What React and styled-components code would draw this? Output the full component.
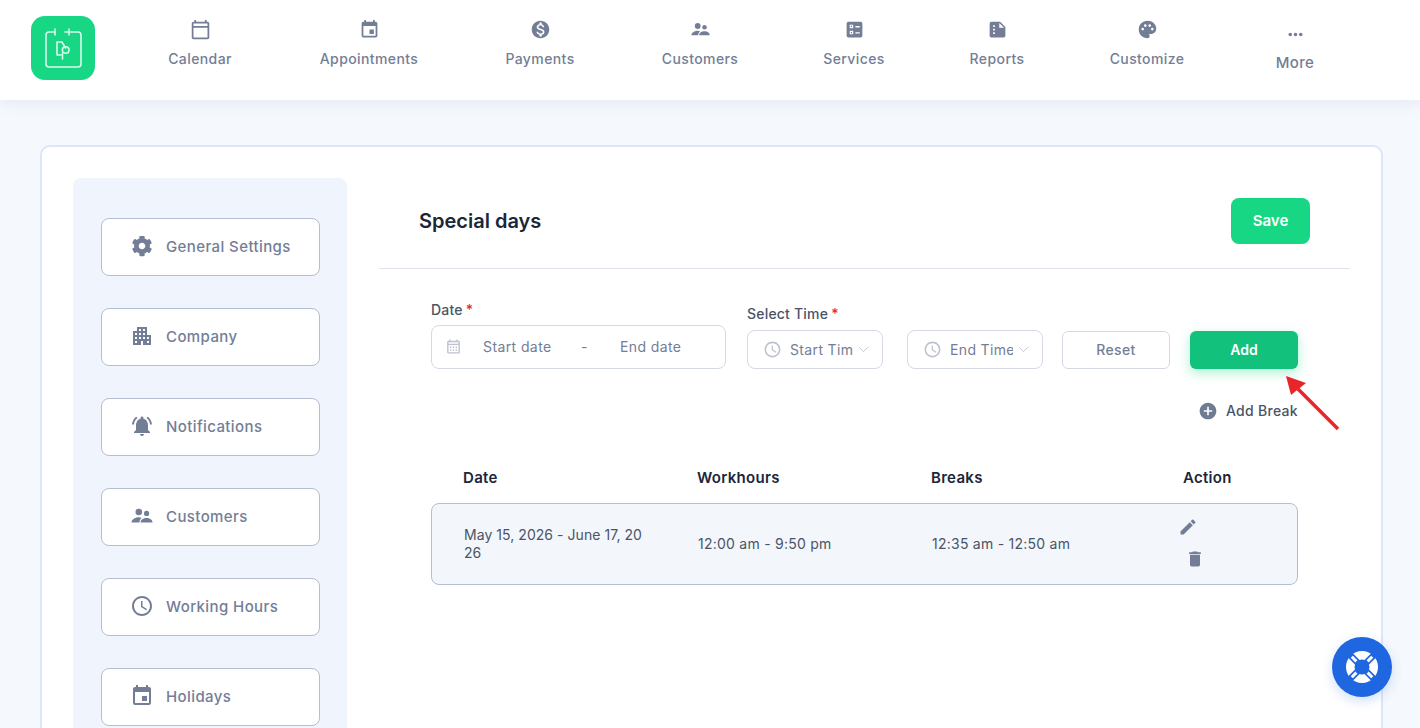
import React from 'react';
import styled, { createGlobalStyle } from 'styled-components';
import {
  MdOutlineCalendarToday,
  MdEvent,
  MdMonetizationOn,
  MdPalette,
  MdMoreHoriz,
  MdApartment,
  MdNotificationsActive,
  MdAccessTime,
  MdEdit,
  MdDelete,
  MdAddCircle,
  MdOutlineCalendarMonth,
} from 'react-icons/md';
import { FaCog } from 'react-icons/fa';
import { LuChevronDown } from 'react-icons/lu';

const GlobalStyle = createGlobalStyle`
  html, body {
    margin: 0;
    padding: 0;
    height: 100%;
    overflow: hidden;
    background: #f5f8fc;
  }
  body {
    font-family: Inter, "Liberation Sans", sans-serif;
  }
  * {
    box-sizing: border-box;
  }
`;

const Page = styled.div`
  position: relative;
  width: 1420px;
  height: 728px;
  overflow: hidden;
`;

const Header = styled.header`
  height: 100px;
  background: #fff;
  display: flex;
  align-items: flex-start;
  padding: 16px 0 0 31px;
  box-shadow: 0 2px 14px rgba(120, 135, 175, 0.14);
`;

const Logo = styled.div`
  width: 64px;
  height: 64px;
  border-radius: 14px;
  background: #17d684;
  display: flex;
  align-items: center;
  justify-content: center;
  margin-right: 29px;
  flex: none;
`;

const Nav = styled.nav`
  display: flex;
`;

const NavItem = styled.a`
  width: ${(p) => p.$w}px;
  display: flex;
  flex-direction: column;
  align-items: center;
  color: #737e96;
  font-size: 14px;
  font-weight: 500;
  letter-spacing: 0.4px;
  line-height: 20px;
  svg {
    display: block;
    width: 21px;
    height: 21px;
    margin-top: ${(p) => (p.$low ? 8 : 3)}px;
    margin-bottom: ${(p) => (p.$low ? 4 : 9)}px;
  }
`;

const MoreLabel = styled.span`
  font-size: 15px;
  margin-top: 4px;
`;

const Body = styled.div`
  padding: 45px 37px 0 40px;
`;

const Card = styled.section`
  display: flex;
  gap: 32px;
  height: 640px;
  background: #fff;
  border: 2px solid #dde6f5;
  border-radius: 10px;
  padding: 31px 31px 0;
`;

const Sidebar = styled.aside`
  width: 274px;
  flex: none;
  background: #f0f5fd;
  border-radius: 8px;
  padding: 40px 27px 40px 28px;
  display: flex;
  flex-direction: column;
  gap: 32px;
`;

const SideLink = styled.a`
  height: 58px;
  flex: none;
  display: flex;
  align-items: center;
  background: #fff;
  border: 1px solid #b5bdd0;
  border-radius: 8px;
  padding: 0 0 2px 28px;
  color: #737e96;
  font-size: 15px;
  font-weight: 500;
  letter-spacing: 0.4px;
  svg {
    width: 24px;
    height: 24px;
    margin-right: 12px;
    flex: none;
  }
`;

const GearIcon = styled(FaCog)`
  padding: 1.5px;
`;

const Main = styled.main`
  flex: 1;
  min-width: 0;
`;

const TitleRow = styled.div`
  display: flex;
  align-items: center;
  justify-content: space-between;
  padding: 20px 40px 24px;
  border-bottom: 1px solid #dfe3ea;
`;

const Title = styled.h1`
  margin: 0;
  font-size: 20px;
  font-weight: 600;
  color: #1c2639;
`;

const SaveButton = styled.button`
  width: 79px;
  height: 46px;
  border: none;
  border-radius: 8px;
  padding: 0 0 2px;
  background: #17d684;
  color: #fff;
  font: inherit;
  font-size: 15px;
  font-weight: 600;
`;

const Content = styled.div`
  padding: 32px 52px 0;
`;

const FormRow = styled.div`
  display: flex;
  align-items: flex-end;
`;

const Field = styled.div`
  display: flex;
  flex-direction: column;
  margin-right: ${(p) => p.$mr || 0}px;
`;

const Label = styled.label`
  font-size: 14px;
  font-weight: 500;
  line-height: 18px;
  color: #4a5468;
  letter-spacing: 0.2px;
  margin-bottom: ${(p) => p.$mb}px;
  i {
    color: #e5283a;
    font-style: normal;
    margin-left: 3px;
  }
`;

const DateInput = styled.div`
  width: 295px;
  height: 44px;
  display: flex;
  align-items: center;
  border: 1px solid #d5d9e5;
  border-radius: 8px;
  padding: 0 0 2px 13px;
  color: #737e96;
  font-size: 14px;
  letter-spacing: 0.4px;
  svg {
    width: 17px;
    height: 17px;
    color: #bcc2d0;
    flex: none;
  }
`;

const DatePart = styled.span`
  width: ${(p) => p.$w}px;
  margin-left: ${(p) => p.$ml}px;
  flex: none;
`;

const SelectBox = styled.div`
  width: 136px;
  height: 39px;
  display: flex;
  align-items: center;
  border: 1px solid #d5d9e5;
  border-radius: 8px;
  padding: 0 0 1px 15px;
  color: #737e96;
  font-size: 14px;
  letter-spacing: 0.35px;
  margin-right: ${(p) => p.$mr || 0}px;
  > svg:first-child {
    width: 19px;
    height: 19px;
    color: #bcc2d0;
    flex: none;
    margin-right: 8px;
  }
  > svg:last-child {
    width: 17px;
    height: 17px;
    color: #b9bfcc;
    flex: none;
    stroke-width: 1.2;
    margin-left: 2px;
  }
`;

const SelectText = styled.span`
  width: 63px;
  overflow: hidden;
  white-space: nowrap;
`;

const GhostButton = styled.button`
  width: 108px;
  height: 38px;
  margin-right: 20px;
  background: #fff;
  border: 1px solid #d5d9e5;
  border-radius: 6px;
  padding: 0 0 2px;
  color: #737e96;
  font: inherit;
  font-size: 14px;
  font-weight: 500;
  letter-spacing: 0.35px;
`;

const AddButton = styled.button`
  width: 108px;
  height: 38px;
  background: #12c27c;
  border: none;
  border-radius: 6px;
  padding: 0 0 1px;
  color: #fff;
  font: inherit;
  font-size: 14px;
  font-weight: 600;
  box-shadow: 0 4px 12px rgba(23, 214, 132, 0.35);
`;

const AddBreak = styled.a`
  display: flex;
  align-items: center;
  justify-content: flex-end;
  margin-top: 32px;
  height: 20px;
  color: #4a5468;
  font-size: 14px;
  font-weight: 500;
  letter-spacing: 0.3px;
  line-height: 18px;
  padding-bottom: 1px;
  svg {
    width: 20px;
    height: 20px;
    color: #6f7a93;
    margin: 1px 8px 0 0;
  }
`;

const TableHead = styled.div`
  display: grid;
  grid-template-columns: 234px 234px 252px 1fr;
  padding-left: 32px;
  margin-top: 47px;
  font-size: 15px;
  font-weight: 600;
  line-height: 20px;
  color: #1c2639;
  letter-spacing: 0.3px;
`;

const TableRow = styled.div`
  display: grid;
  grid-template-columns: 234px 234px 246px 1fr;
  align-items: center;
  height: 82px;
  margin-top: 15px;
  padding-left: 32px;
  background: #f3f6fb;
  border: 1px solid #b5bdd0;
  border-radius: 8px;
  color: #4a5468;
  font-size: 14px;
  line-height: 18px;
  letter-spacing: 0.25px;
`;

const DateCell = styled.div`
  width: 184px;
  word-break: break-all;
  letter-spacing: 0.05px;
`;

const Actions = styled.div`
  display: flex;
  flex-direction: column;
  gap: 12px;
  margin-top: -3px;
  svg {
    display: block;
    width: 20px;
    height: 20px;
    color: #737e96;
  }
  svg:last-child {
    margin-left: 7px;
  }
`;

const ArrowMark = styled.svg`
  position: absolute;
  left: 1280px;
  top: 370px;
  width: 64px;
  height: 66px;
`;

const HelpButton = styled.button`
  position: absolute;
  left: 1332px;
  top: 637px;
  width: 60px;
  height: 60px;
  border-radius: 50%;
  border: none;
  padding: 0;
  background: #1f67e0;
  display: flex;
  align-items: center;
  justify-content: center;
  box-shadow: 0 4px 12px rgba(31, 103, 224, 0.2);
  svg {
    width: 32px;
    height: 32px;
  }
`;

const LogoMark = () => (
  <svg width="39" height="40" viewBox="0 0 39 40" fill="none" stroke="#d8fbeb" strokeWidth="1.6" strokeLinecap="round" strokeLinejoin="round">
    <path d="M11 4H5A3 3 0 0 0 2 7V36a3 3 0 0 0 3 3H34a3 3 0 0 0 3-3V7a3 3 0 0 0-3-3H21" />
    <path d="M11 1V7M25 1V7" />
    <path d="M13 14V27H17M13 14H18L21.500 20" />
    <circle cx="21.700" cy="22" r="3.300" />
    <path d="M18.500 25V31" />
  </svg>
);

const LifeRing = () => (
  <svg viewBox="0 0 32 32">
    <circle cx="16" cy="16" r="16" fill="#fff" />
    <g stroke="#1f67e0" strokeWidth="6.500">
      <path d="M4 4L28 28M28 4L4 28" />
    </g>
    <g stroke="#fff" strokeWidth="3">
      <path d="M5.800 5.800L10.400 10.400M26.200 5.800L21.600 10.400M5.800 26.200L10.400 21.600M26.200 26.200L21.600 21.600" />
    </g>
    <circle cx="16" cy="16" r="7.500" fill="#1f67e0" />
  </svg>
);

const PeopleIcon = () => (
  <svg viewBox="0 0 24 24" fill="currentColor">
    <circle cx="8.800" cy="8" r="3.300" />
    <circle cx="16.600" cy="9.400" r="2.600" />
    <path d="M1.500 18.600c0-2.800 3.600-5.300 7-5.300 1.200 0 2.300.3 3.200.7-1.400 1-2.300 2.500-2.300 4.600H1.500z" />
    <path d="M10.500 18.600c0-2.800 3-4.500 6-4.500s6 1.700 6 4.500H10.500z" />
  </svg>
);

const ServicesIcon = () => (
  <svg viewBox="0 0 24 24" fill="currentColor">
    <path
      fillRule="evenodd"
      d="M5 3h14a2 2 0 0 1 2 2v14a2 2 0 0 1-2 2H5a2 2 0 0 1-2-2V5a2 2 0 0 1 2-2zM6.500 6.500v4h4v-4h-4zm1.300 1.300h1.400v1.400H7.800V7.800zM6.500 13.500v4h4v-4h-4zm1.300 1.300h1.400v1.400H7.800v-1.400zM13 8v1.600h5V8h-5zm0 7v1.600h5V15h-5z"
    />
  </svg>
);

const ReportsIcon = () => (
  <svg viewBox="0 0 24 24" fill="currentColor">
    <path
      fillRule="evenodd"
      d="M5 3h10l6 6v10a2 2 0 0 1-2 2H5a2 2 0 0 1-2-2V5a2 2 0 0 1 2-2zM14 4.500V10h5.500L14 4.500zM7 7v2h2V7H7zm0 4v2h2v-2H7zm0 4v2h2v-2H7z"
    />
  </svg>
);

const navItems = [
  { label: 'Calendar', w: 152, icon: <MdOutlineCalendarToday /> },
  { label: 'Appointments', w: 186, icon: <MdEvent /> },
  { label: 'Payments', w: 156, icon: <MdMonetizationOn /> },
  { label: 'Customers', w: 164, icon: <PeopleIcon /> },
  { label: 'Services', w: 144, icon: <ServicesIcon /> },
  { label: 'Reports', w: 142, icon: <ReportsIcon /> },
  { label: 'Customize', w: 158, icon: <MdPalette /> },
];

const sideItems = [
  { label: 'General Settings', icon: <GearIcon /> },
  { label: 'Company', icon: <MdApartment /> },
  { label: 'Notifications', icon: <MdNotificationsActive /> },
  { label: 'Customers', icon: <PeopleIcon /> },
  { label: 'Working Hours', icon: <MdAccessTime /> },
  { label: 'Holidays', icon: <MdEvent /> },
];

export default function App() {
  return (
    <Page>
      <GlobalStyle />
      <Header>
        <Logo>
          <LogoMark />
        </Logo>
        <Nav>
          {navItems.map((item) => (
            <NavItem key={item.label} $w={item.w}>
              {item.icon}
              {item.label}
            </NavItem>
          ))}
          <NavItem $w={138} $low>
            <MdMoreHoriz />
            <MoreLabel>More</MoreLabel>
          </NavItem>
        </Nav>
      </Header>
      <Body>
        <Card>
          <Sidebar>
            {sideItems.map((item) => (
              <SideLink key={item.label}>
                {item.icon}
                {item.label}
              </SideLink>
            ))}
          </Sidebar>
          <Main>
            <TitleRow>
              <Title>Special days</Title>
              <SaveButton>Save</SaveButton>
            </TitleRow>
            <Content>
              <FormRow>
                <Field $mr={21}>
                  <Label $mb={6}>
                    Date<i>*</i>
                  </Label>
                  <DateInput>
                    <MdOutlineCalendarMonth />
                    <DatePart $w={98} $ml={21}>Start date</DatePart>
                    <DatePart $w={39} $ml={0}>-</DatePart>
                    <DatePart $w={80} $ml={0}>End date</DatePart>
                  </DateInput>
                </Field>
                <Field $mr={24}>
                  <Label $mb={7}>
                    Select Time<i>*</i>
                  </Label>
                  <SelectBox>
                    <MdAccessTime />
                    <SelectText>Start Time</SelectText>
                    <LuChevronDown />
                  </SelectBox>
                </Field>
                <SelectBox $mr={19}>
                  <MdAccessTime />
                  <SelectText>End Time</SelectText>
                  <LuChevronDown />
                </SelectBox>
                <GhostButton>Reset</GhostButton>
                <AddButton>Add</AddButton>
              </FormRow>
              <AddBreak>
                <MdAddCircle />
                Add Break
              </AddBreak>
              <TableHead>
                <span>Date</span>
                <span>Workhours</span>
                <span>Breaks</span>
                <span>Action</span>
              </TableHead>
              <TableRow>
                <DateCell>May 15, 2026 - June 17, 2026</DateCell>
                <div>12:00 am - 9:50 pm</div>
                <div>12:35 am - 12:50 am</div>
                <Actions>
                  <MdEdit />
                  <MdDelete />
                </Actions>
              </TableRow>
            </Content>
          </Main>
        </Card>
      </Body>
      <ArrowMark viewBox="0 0 64 66" fill="none">
        <path d="M18 19L58 59" stroke="#e8262a" strokeWidth="3.600" />
        <path d="M6 6L26 13L11 25Z" fill="#e8262a" />
      </ArrowMark>
      <HelpButton>
        <LifeRing />
      </HelpButton>
    </Page>
  );
}
